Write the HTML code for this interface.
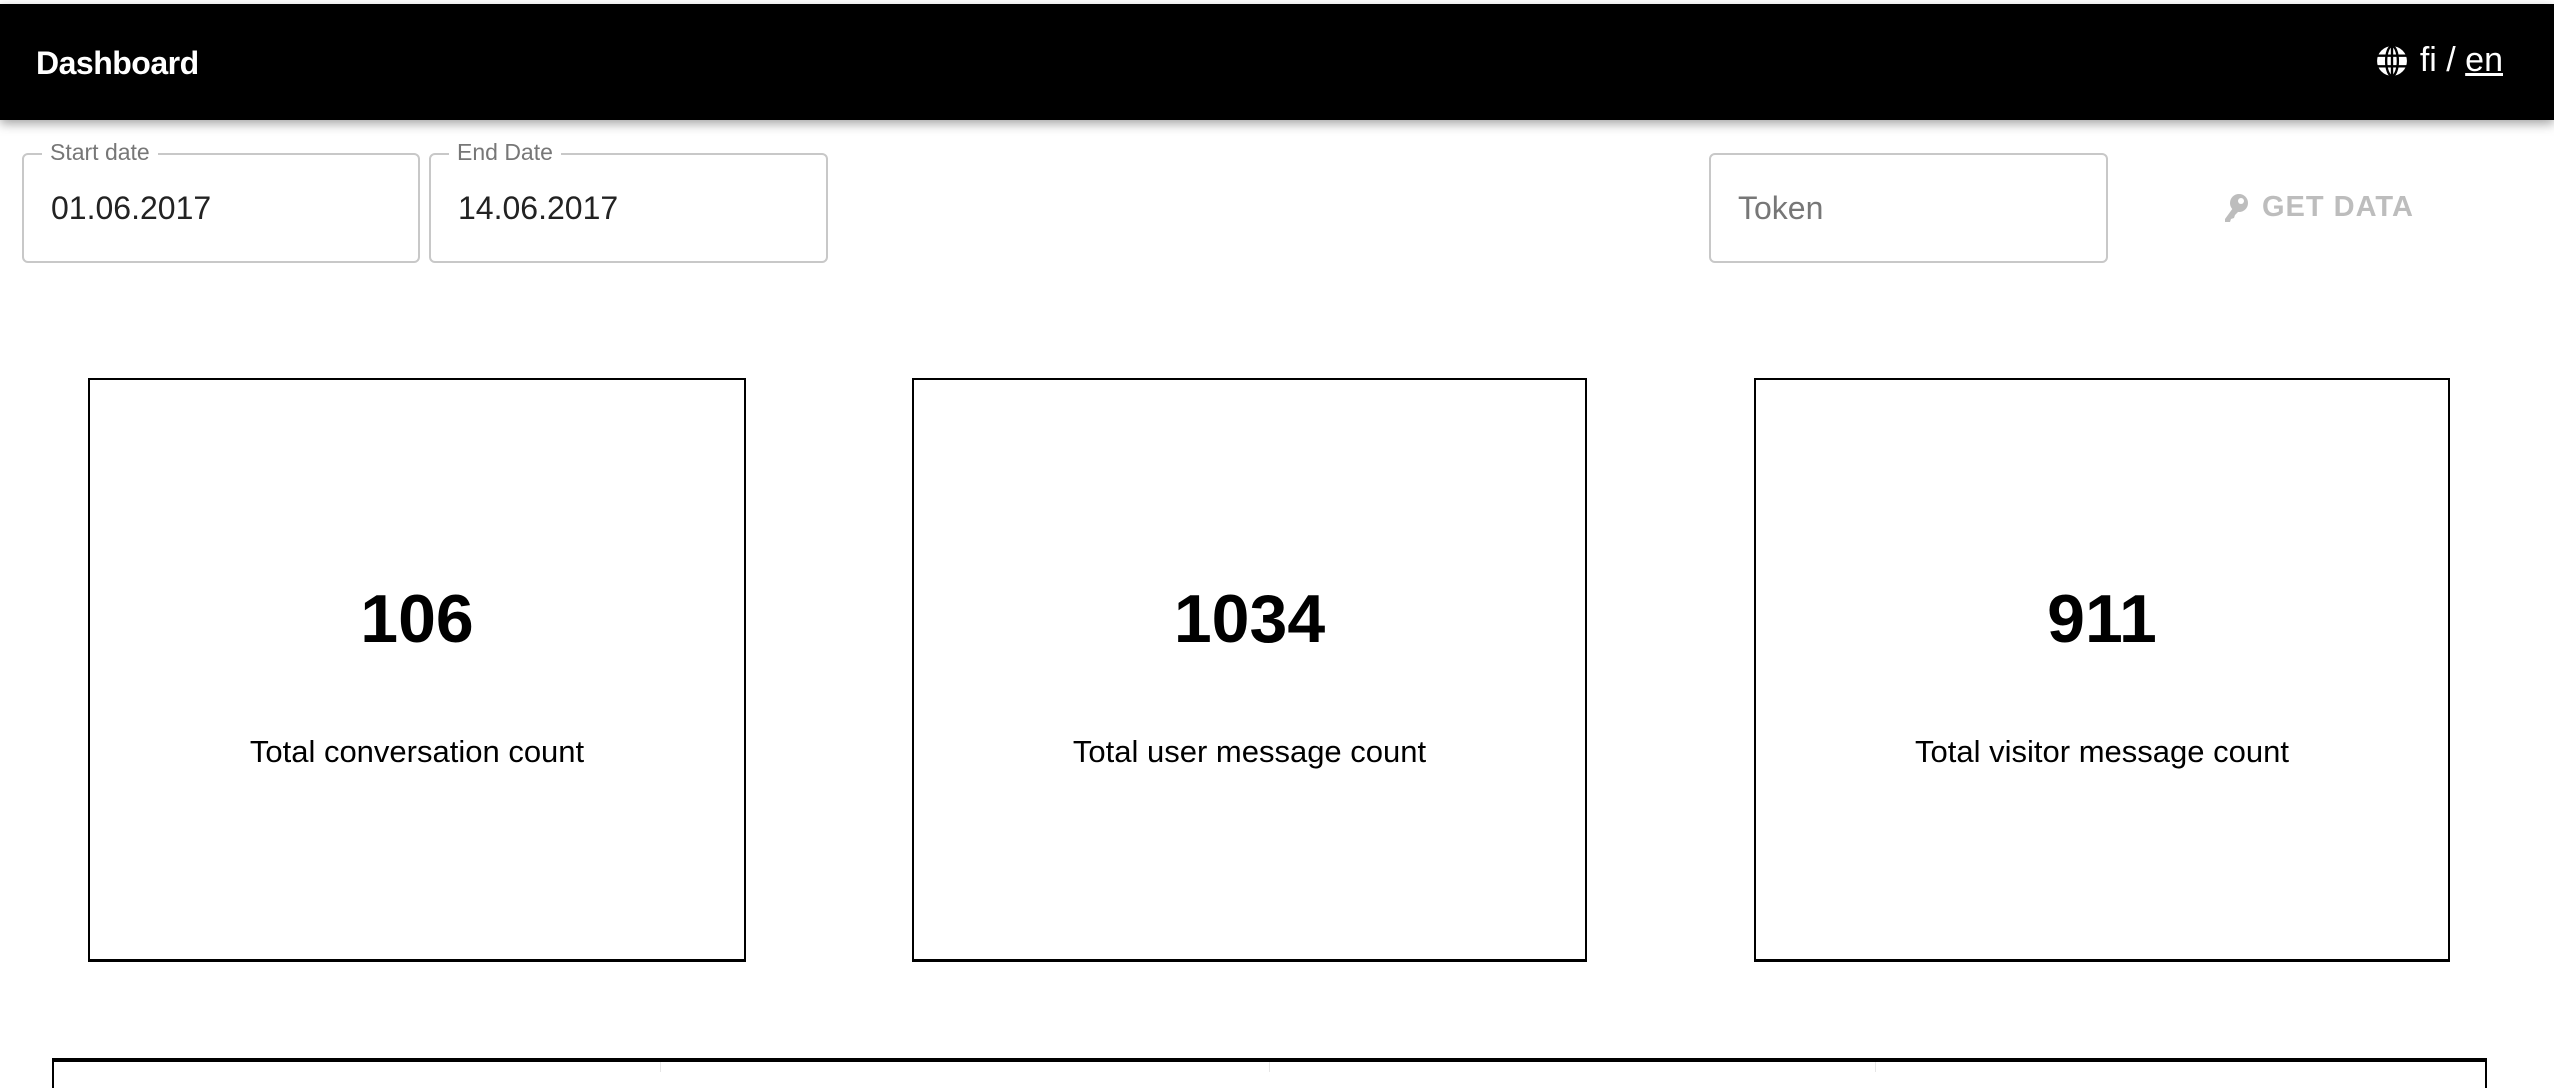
<!DOCTYPE html>
<html><head><meta charset="utf-8"><style>
*{box-sizing:border-box;margin:0;padding:0}
body{width:2554px;height:1071px;overflow:hidden;background:#fff;font-family:"Liberation Sans",sans-serif;position:relative}
.bar{position:absolute;left:0;top:4px;width:2554px;height:116px;background:#000;box-shadow:0 4px 10px rgba(0,0,0,.35)}
.title{position:absolute;left:36px;top:45px;color:#fff;font-weight:bold;font-size:32px;letter-spacing:-0.5px}
.lang{position:absolute;right:51px;top:41px;color:#fff;font-size:34px;display:flex;align-items:center;gap:12px}
.lang u{text-decoration:underline}
.field{position:absolute;top:153px;height:110px;border:2px solid #c8c8c8;border-radius:6px}
.field .lbl{position:absolute;left:18px;top:-16px;background:#fff;padding:0 8px;color:#777;font-size:23px}
.field .val{position:absolute;left:27px;top:35px;font-size:32px;color:#222}
.card{position:absolute;top:378px;height:584px;border:2px solid #000;border-bottom-width:3px}
.w{position:absolute;top:0;text-align:center}
.num{position:absolute;left:0;right:0;top:580px;font-weight:bold;font-size:68px}
.cap{position:absolute;left:0;right:0;top:734px;font-size:31px}
</style></head><body>
<div class="bar"></div>
<div class="title">Dashboard</div>
<div class="lang">
<svg width="32" height="32" viewBox="0 0 30 30"><circle cx="15" cy="15" r="14" fill="#fff"/><g stroke="#000" stroke-width="2.2" fill="none"><ellipse cx="15" cy="15" rx="5.5" ry="14"/><line x1="15" y1="1" x2="15" y2="29"/><line x1="1" y1="10" x2="29" y2="10"/><line x1="1" y1="20" x2="29" y2="20"/></g></svg>
<span>fi / <u>en</u></span></div>

<div class="field" style="left:22px;width:398px"><span class="lbl">Start date</span><span class="val">01.06.2017</span></div>
<div class="field" style="left:429px;width:399px"><span class="lbl">End Date</span><span class="val">14.06.2017</span></div>
<div class="field" style="left:1709px;width:399px"><span class="val" style="color:#777;left:27px">Token</span></div>
<div style="position:absolute;left:2222px;top:191px;display:flex;align-items:center;gap:12px;color:#bdbdbd;font-weight:bold;font-size:29px;letter-spacing:1px">
<svg width="28" height="30" viewBox="0 0 28 30"><circle cx="17" cy="10" r="9" fill="#bdbdbd"/><circle cx="19" cy="8" r="3" fill="#fff"/><path d="M11 15 L3 26 L3 29 L8 29 L9 26 L12 25 L13 22 L16 19Z" fill="#bdbdbd"/></svg>
<span>GET DATA</span></div>

<div class="card" style="left:88px;width:658px"></div>
<div class="card" style="left:912px;width:675px"></div>
<div class="card" style="left:1754px;width:696px"></div>
<div class="w" style="left:88px;width:658px"><div class="num">106</div><div class="cap">Total conversation count</div></div>
<div class="w" style="left:912px;width:675px"><div class="num">1034</div><div class="cap">Total user message count</div></div>
<div class="w" style="left:1754px;width:696px"><div class="num">911</div><div class="cap">Total visitor message count</div></div>

<div style="position:absolute;left:52px;top:1058px;width:2435px;height:30px;border-top:4px solid #000;border-left:2px solid #000;border-right:2px solid #000"></div>
<div style="position:absolute;left:660px;top:1062px;width:1px;height:10px;background:#e6e6e6"></div>
<div style="position:absolute;left:1269px;top:1062px;width:1px;height:10px;background:#e6e6e6"></div>
<div style="position:absolute;left:1875px;top:1062px;width:1px;height:10px;background:#e6e6e6"></div>
</body></html>
